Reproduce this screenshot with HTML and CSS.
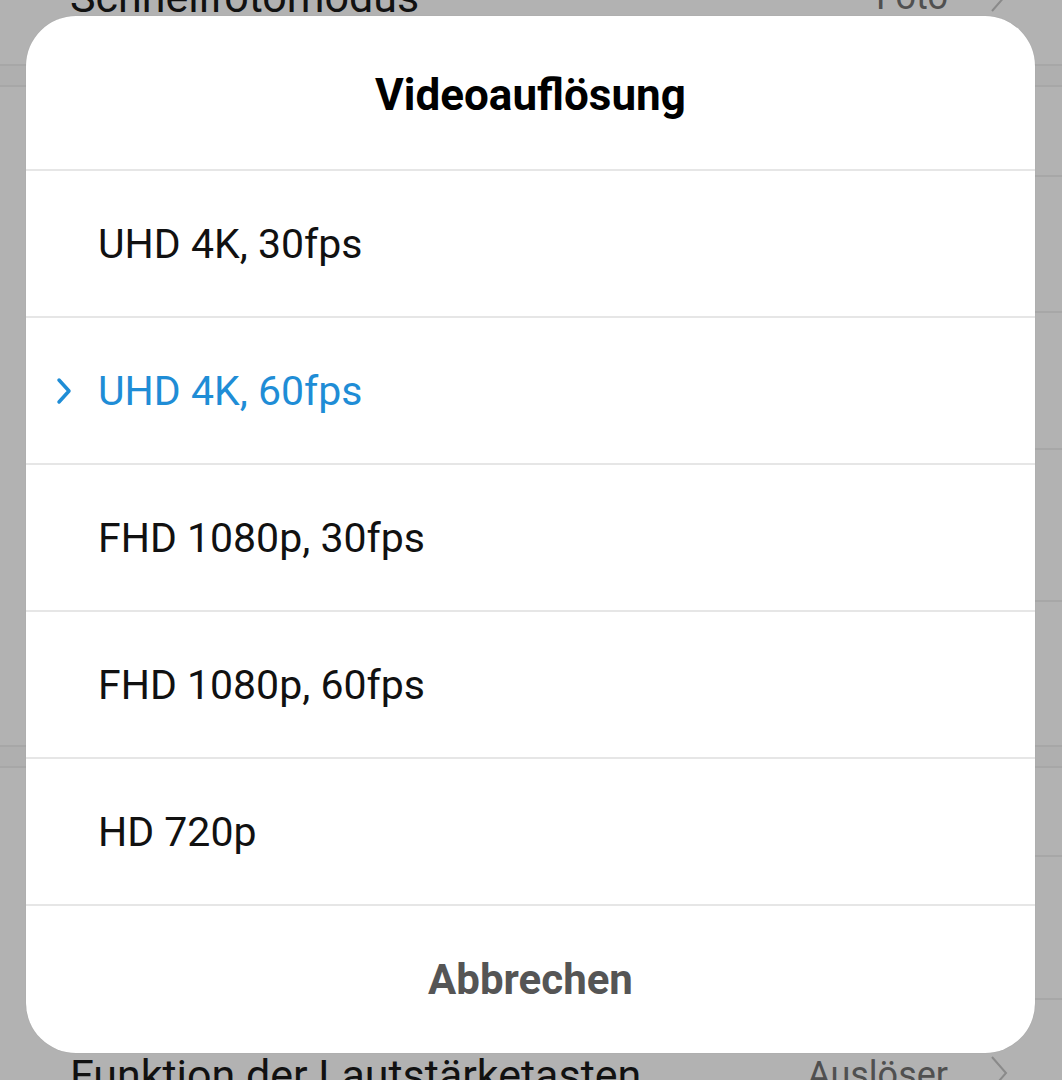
FILE: index.html
```html
<!DOCTYPE html>
<html lang="de">
<head>
<meta charset="utf-8">
<title>Videoauflösung</title>
<link rel="stylesheet" href="styles.css">
</head>
<body>
<div class="settings">
  <div class="srow first">
    <span class="slabel">Schnellfotomodus</span>
    <span class="svalue">Foto</span>
    <svg class="schev" viewBox="0 0 18 36"><path d="M2 2 L16 18 L2 34"/></svg>
  </div>
  <div class="gap"></div>
  <div class="srow h90"></div>
  <div class="srow h136"></div>
  <div class="srow h137"></div>
  <div class="srow h152"></div>
  <div class="srow h143 nob"></div>
  <div class="gap"></div>
  <div class="srow h89"></div>
  <div class="srow h143"></div>
  <div class="srow last">
    <span class="slabel">Funktion der Lautstärketasten</span>
    <span class="svalue">Auslöser</span>
    <svg class="schev" viewBox="0 0 18 36"><path d="M2 2 L16 18 L2 34"/></svg>
  </div>
</div>

<div class="dialog">
  <div class="title">Videoauflösung</div>
  <div class="option"><span class="mark"></span><span class="otext">UHD 4K, 30fps</span></div>
  <div class="option selected"><span class="mark"><svg viewBox="0 0 16 28"><path d="M3 3 L13 14 L3 25"/></svg></span><span class="otext">UHD 4K, 60fps</span></div>
  <div class="option"><span class="mark"></span><span class="otext">FHD 1080p, 30fps</span></div>
  <div class="option"><span class="mark"></span><span class="otext">FHD 1080p, 60fps</span></div>
  <div class="option"><span class="mark"></span><span class="otext">HD 720p</span></div>
  <div class="footer">Abbrechen</div>
</div>
</body>
</html>
```
FILE: styles.css
```css
html, body {
  margin: 0;
  padding: 0;
}
body {
  width: 1062px;
  height: 1080px;
  overflow: hidden;
  background: #b2b2b2;
  font-family: Roboto, "Noto Sans", sans-serif;
  position: relative;
}

/* background settings list (dimmed) */
.settings {
  display: flex;
  flex-direction: column;
}
.srow {
  display: flex;
  align-items: flex-start;
  margin-left: 70px;
  border-bottom: 2px solid #a7a7a7;
  box-sizing: border-box;
  flex-shrink: 0;
}
.srow.nob { border-bottom: none; }
.srow.first {
  margin-top: -29px;
  height: 93px;
  border-bottom: none;
}
.srow.last {
  padding-top: 49px;
  height: 130px;
  border-bottom: none;
}
.h90 { height: 90px; }
.h136 { height: 136px; }
.h137 { height: 137px; }
.h152 { height: 152px; }
.h143 { height: 143px; }
.h89 { height: 89px; }
.gap {
  height: 23px;
  flex-shrink: 0;
  box-sizing: border-box;
  border-top: 2px solid #a7a7a7;
  border-bottom: 2px solid #a7a7a7;
  background: #afafaf;
}
.slabel {
  font-size: 43px;
  line-height: 52px;
  color: #111;
  flex: 1;
}
.svalue {
  font-size: 36px;
  line-height: 52px;
  color: #505050;
  margin-right: 42px;
}
.schev {
  width: 18px;
  height: 36px;
  margin-top: 6px;
  margin-right: 54px;
  fill: none;
  stroke: #8a8a8a;
  stroke-width: 2;
}

/* dialog */
.dialog {
  position: absolute;
  left: 26px;
  top: 16px;
  width: 1009px;
  height: 1037px;
  background: #fff;
  border-radius: 50px;
  display: flex;
  flex-direction: column;
  overflow: hidden;
  box-shadow: 0 0 1px rgba(0,0,0,0.15);
}
.title {
  height: 153px;
  padding-top: 4px;
  box-sizing: border-box;
  display: flex;
  align-items: center;
  justify-content: center;
  font-size: 44px;
  font-weight: 700;
  color: #000;
  flex-shrink: 0;
}
.option {
  height: 147px;
  box-sizing: border-box;
  border-top: 2px solid #e6e6e6;
  display: flex;
  align-items: center;
  padding-left: 30px;
  flex-shrink: 0;
}
.mark {
  width: 42px;
  height: 28px;
  display: flex;
  align-items: center;
}
.mark svg {
  width: 16px;
  height: 28px;
  fill: none;
  stroke: #1f8dd6;
  stroke-width: 3.5;
  stroke-linecap: round;
  stroke-linejoin: round;
}
.otext {
  font-size: 41px;
  color: #111;
}
.option.selected .otext {
  color: #1f8dd6;
}
.footer {
  flex: 1;
  border-top: 2px solid #e6e6e6;
  display: flex;
  align-items: center;
  justify-content: center;
  font-size: 42px;
  font-weight: 700;
  color: #555;
}
```
